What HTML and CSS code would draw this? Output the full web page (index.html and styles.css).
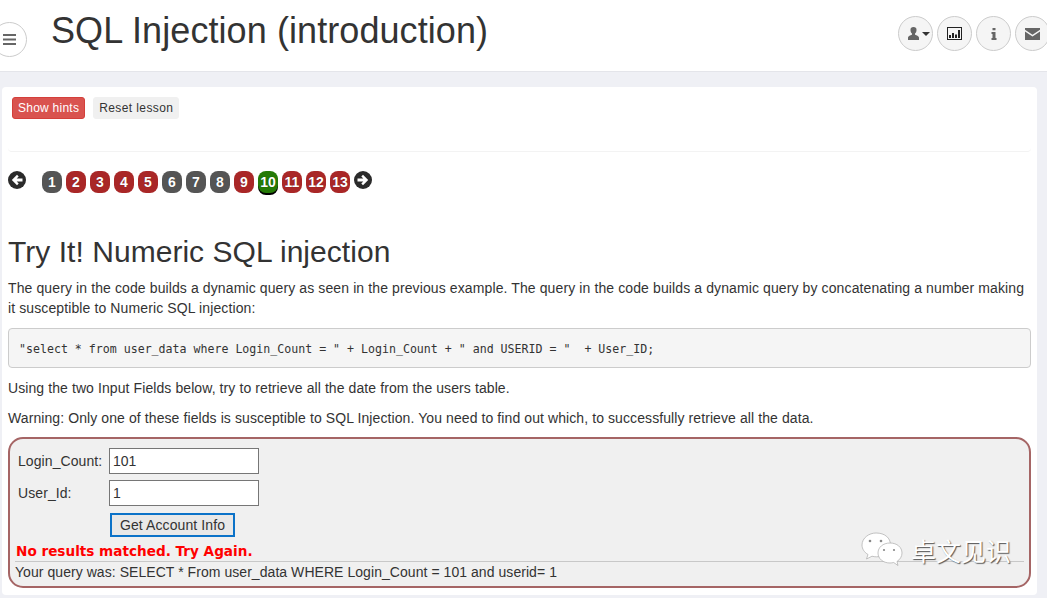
FILE: index.html
```html
<!DOCTYPE html>
<html lang="en">
<head>
<meta charset="utf-8">
<title>SQL Injection (introduction)</title>
<link rel="stylesheet" href="styles.css">
</head>
<body>
<header class="topbar">
  <button class="round menu-btn" aria-label="Menu">
    <svg class="ico" width="13" height="11" viewBox="0 0 13 11"><path d="M0 0h13v2H0zM0 4.500h13v2H0zM0 9h13v2H0z"/></svg>
  </button>
  <h1 class="page-title">SQL Injection (introduction)</h1>
  <nav class="top-actions">
    <button class="round user-btn" aria-label="User">
      <svg class="ico" width="11" height="13" viewBox="0 0 11 13"><path d="M5.500 0a3 3 0 0 1 3 3.200c0 1.400-.7 2.700-1.500 3.200v1c.2.500 4 1 4 3.400V13H0v-2.200c0-2.400 3.800-2.900 4-3.400v-1c-.8-.5-1.500-1.800-1.500-3.200a3 3 0 0 1 3-3.200z"/></svg>
      <span class="caret"></span>
    </button>
    <button class="round" aria-label="Chart">
      <svg width="15" height="13" viewBox="0 0 15 13"><path fill="#222" fill-rule="evenodd" d="M0 0h15v13H0zM1 1v11h13V1z"/><path fill="#222" d="M2 8h2v3H2zM5 6h2v5H5zM8 7.500h2V11H8zM11 3h2v8h-2z"/></svg>
    </button>
    <button class="round" aria-label="Info">
      <svg class="ico" width="6" height="12" viewBox="0 0 6 12"><path d="M1.500 0h3v2.300h-3zM.5 4h4v6h1v2H.5v-2h1V6h-1z"/></svg>
    </button>
    <button class="round" aria-label="Mail">
      <svg class="ico" width="15" height="12" viewBox="0 0 15 12"><path d="M0 0h15v1.800L7.500 6.800 0 1.800zM0 3.600l7.500 5 7.500-5V12H0z"/></svg>
    </button>
  </nav>
</header>

<main class="card">
  <div class="lesson-btns">
    <button class="btn btn-red">Show hints</button>
    <button class="btn btn-plain">Reset lesson</button>
  </div>
  <div class="hint-well"></div>

  <div class="pager">
    <span class="arrow"><svg width="12" height="12" viewBox="0 0 12 12"><path fill="#fff" d="M6 .8 7.700 2.500 5.700 4.500H11.500v3H5.700l2 2L6 11.200.8 6z"/></svg></span>
    <span class="pills">
      <span class="pill grey">1</span><span class="pill red">2</span><span class="pill red">3</span><span class="pill red">4</span><span class="pill red">5</span><span class="pill grey">6</span><span class="pill grey">7</span><span class="pill grey">8</span><span class="pill red">9</span><span class="pill green">10</span><span class="pill red">11</span><span class="pill red">12</span><span class="pill red">13</span>
    </span>
    <span class="arrow"><svg width="12" height="12" viewBox="0 0 12 12"><path fill="#fff" d="M6 .8 4.300 2.500l2 2H.5v3h5.800l-2 2L6 11.200 11.200 6z"/></svg></span>
  </div>

  <h2 class="lesson-title">Try It! Numeric SQL injection</h2>
  <p class="para p-intro">The query in the code builds a dynamic query as seen in the previous example. The query in the code builds a dynamic query by concatenating a number making it susceptible to Numeric SQL injection:</p>
  <pre class="code">"select * from user_data where Login_Count = " + Login_Count + " and USERID = "  + User_ID;</pre>
  <p class="para">Using the two Input Fields below, try to retrieve all the date from the users table.</p>
  <p class="para">Warning: Only one of these fields is susceptible to SQL Injection. You need to find out which, to successfully retrieve all the data.</p>

  <section class="attack">
    <form class="attack-form">
      <label class="lbl" for="lc">Login_Count:</label>
      <input class="field" id="lc" type="text" value="101">
      <label class="lbl" for="uid">User_Id:</label>
      <input class="field" id="uid" type="text" value="1">
      <span></span>
      <button class="submit" type="button">Get Account Info</button>
    </form>
    <div class="fail">No results matched. Try Again.</div>
    <div class="query">Your query was: SELECT * From user_data WHERE Login_Count = 101 and userid= 1</div>
    <div class="watermark">
      <svg width="42" height="36" viewBox="0 0 42 36"><g stroke="#aaa" stroke-width=".7" fill="#fff"><path d="M15 1C8 1 1 6 1 13c0 4 2.500 7.500 6 9.500L5.500 27l5.500-2.800c1.500.4 3 .6 4.500.6 6 0 14-4 14-11.800C29.500 6 24 1 15 1z"/><path d="M29 11c-7 0-12 4.300-12 10s5 10 12 10c1.300 0 2.500-.2 3.700-.5L37 33.500l-1-4c3-2 5-5 5-8.500 0-5.700-5-10-12-10z"/></g><g fill="#888"><circle cx="9" cy="9" r="1.300"/><circle cx="20" cy="9" r="1.300"/><circle cx="23" cy="18" r="1.100"/><circle cx="33" cy="18" r="1.100"/></g></svg>
      <span class="wm-text">卓文见识</span>
    </div>
  </section>
</main>
</body>
</html>
```

FILE: styles.css
```css
* { box-sizing: border-box; }
html, body { margin: 0; padding: 0; height: 598px; overflow: hidden; }
body {
  background: #eff0f5;
  font-family: "Liberation Sans", Arial, sans-serif;
  font-size: 14px;
  color: #333;
  line-height: 20px;
  letter-spacing: .08px;
}
.topbar {
  height: 72px;
  background: #fff;
  border-bottom: 1px solid #e4e5ea;
  display: flex;
  align-items: flex-start;
  overflow: hidden;
}
.round {
  width: 35px;
  height: 35px;
  flex: none;
  border-radius: 50%;
  border: 1px solid #ccc;
  background: #f5f5f5;
  padding: 0;
  display: flex;
  align-items: center;
  justify-content: center;
  gap: 3px;
}
.user-btn { padding-left: 6px; }
.ico { fill: #666; }
.menu-btn { margin: 22px 0 0 -8px; justify-content: flex-start; padding-left: 10px; background: #fff; }
.page-title {
  margin: 11px 0 0 24px;
  font-size: 36px;
  line-height: 40px;
  font-weight: 400;
  color: #333;
  white-space: nowrap;
}
.top-actions {
  margin: 16px -3px 0 auto;
  display: flex;
  gap: 4px;
}
.caret {
  width: 0; height: 0;
  border-left: 4px solid transparent;
  border-right: 4px solid transparent;
  border-top: 4px solid #333;
}
.card {
  position: relative;
  margin: 15px 0 0 2px;
  width: 1035px;
  height: 508px;
  background: #fff;
  border-radius: 4px;
  padding: 10px 6px 0;
}
.lesson-btns { display: flex; gap: 8px; padding-left: 4px; height: 22px; }
.btn {
  height: 22px;
  padding: 0 5px;
  font: 12px/20px "Liberation Sans", Arial, sans-serif;
  border-radius: 3px;
  border: 1px solid transparent;
}
.btn-red { background: #d9534f; border-color: #d43f3a; color: #fff; letter-spacing: .25px; }
.btn-plain { background: #f0f0f0; border-color: #f0f0f0; color: #333; letter-spacing: .4px; }
.hint-well {
  height: 33px;
  border-bottom: 1px solid #f3f3f3;
  border-radius: 0 0 4px 4px;
}
.pager { display: flex; align-items: flex-start; margin-top: 19px; height: 33px; letter-spacing: 0; }
.arrow {
  width: 18px; height: 18px;
  border-radius: 50%;
  background: #2b2b2b;
  display: flex; align-items: center; justify-content: center;
  flex: none;
}
.pills { display: flex; gap: 4px; margin-left: 16px; margin-right: 4px; }
.pill {
  width: 20px; height: 22px;
  border-radius: 8px;
  color: #fff;
  font-weight: 700;
  font-size: 14px;
  line-height: 22px;
  text-align: center;
  text-shadow: 0 0 1px rgba(0,0,0,.4);
}
.grey { background: #555; }
.red { background: #a92727; }
.green { background: #257a07; box-shadow: 0 2px 0 #000; }
.lesson-title {
  margin: 31px 0 0;
  font-size: 30px;
  line-height: 33px;
  font-weight: 400;
  color: #333;
  letter-spacing: .04px;
}
.para { margin: 10px 0 0; font-size: 14px; line-height: 20px; letter-spacing: .09px; }
.p-intro { letter-spacing: .11px; }
.code {
  margin: 10px 0 0;
  height: 40px;
  padding: 11px 10px 9px;
  background: #f5f5f5;
  border: 1px solid #ccc;
  border-radius: 4px;
  font: 11.6px/19px "DejaVu Sans Mono", monospace;
  letter-spacing: 0;
  color: #333;
  white-space: pre;
}
.attack {
  position: relative;
  margin-top: 9px;
  height: 151px;
  background: #f0f0f0;
  border: 2px solid #a56565;
  border-radius: 15px;
  padding: 9px 5px 0;
}
.attack-form {
  display: grid;
  grid-template-columns: 91px 150px;
  grid-auto-rows: 26px;
  row-gap: 6px;
  padding-left: 3px;
  align-items: center;
}
.lbl { font-size: 14px; }
.field {
  width: 150px;
  height: 26px;
  border: 1px solid #767676;
  background: #fff;
  padding: 1px 3px;
  font: 14px "Liberation Sans", Arial, sans-serif;
  color: #333;
}
.submit {
  width: 125px;
  height: 24px;
  margin-left: 1px;
  padding: 0;
  background: #e8e8e8;
  border: 2px solid #0b72c8;
  font: 14px "Liberation Sans", Arial, sans-serif;
  letter-spacing: .1px;
  color: #333;
}
.fail {
  margin: 4px 0 0 1px;
  color: #f00;
  font-family: "DejaVu Sans", sans-serif;
  font-weight: 700;
  font-size: 13.6px;
  line-height: 19px;
  letter-spacing: 0;
}
.query {
  border-top: 1px solid #c8c8c8;
  line-height: 20px;
  font-size: 14px;
  letter-spacing: .055px;
}
.watermark {
  position: absolute;
  left: 851px;
  top: 93px;
  display: flex;
  align-items: center;
  gap: 8px;
}
.wm-text {
  font-family: "Noto Sans CJK SC", sans-serif;
  font-size: 25px;
  line-height: 30px;
  color: #fff;
  letter-spacing: 0;
  text-shadow: 1px 1px 1px #555;
}
```
